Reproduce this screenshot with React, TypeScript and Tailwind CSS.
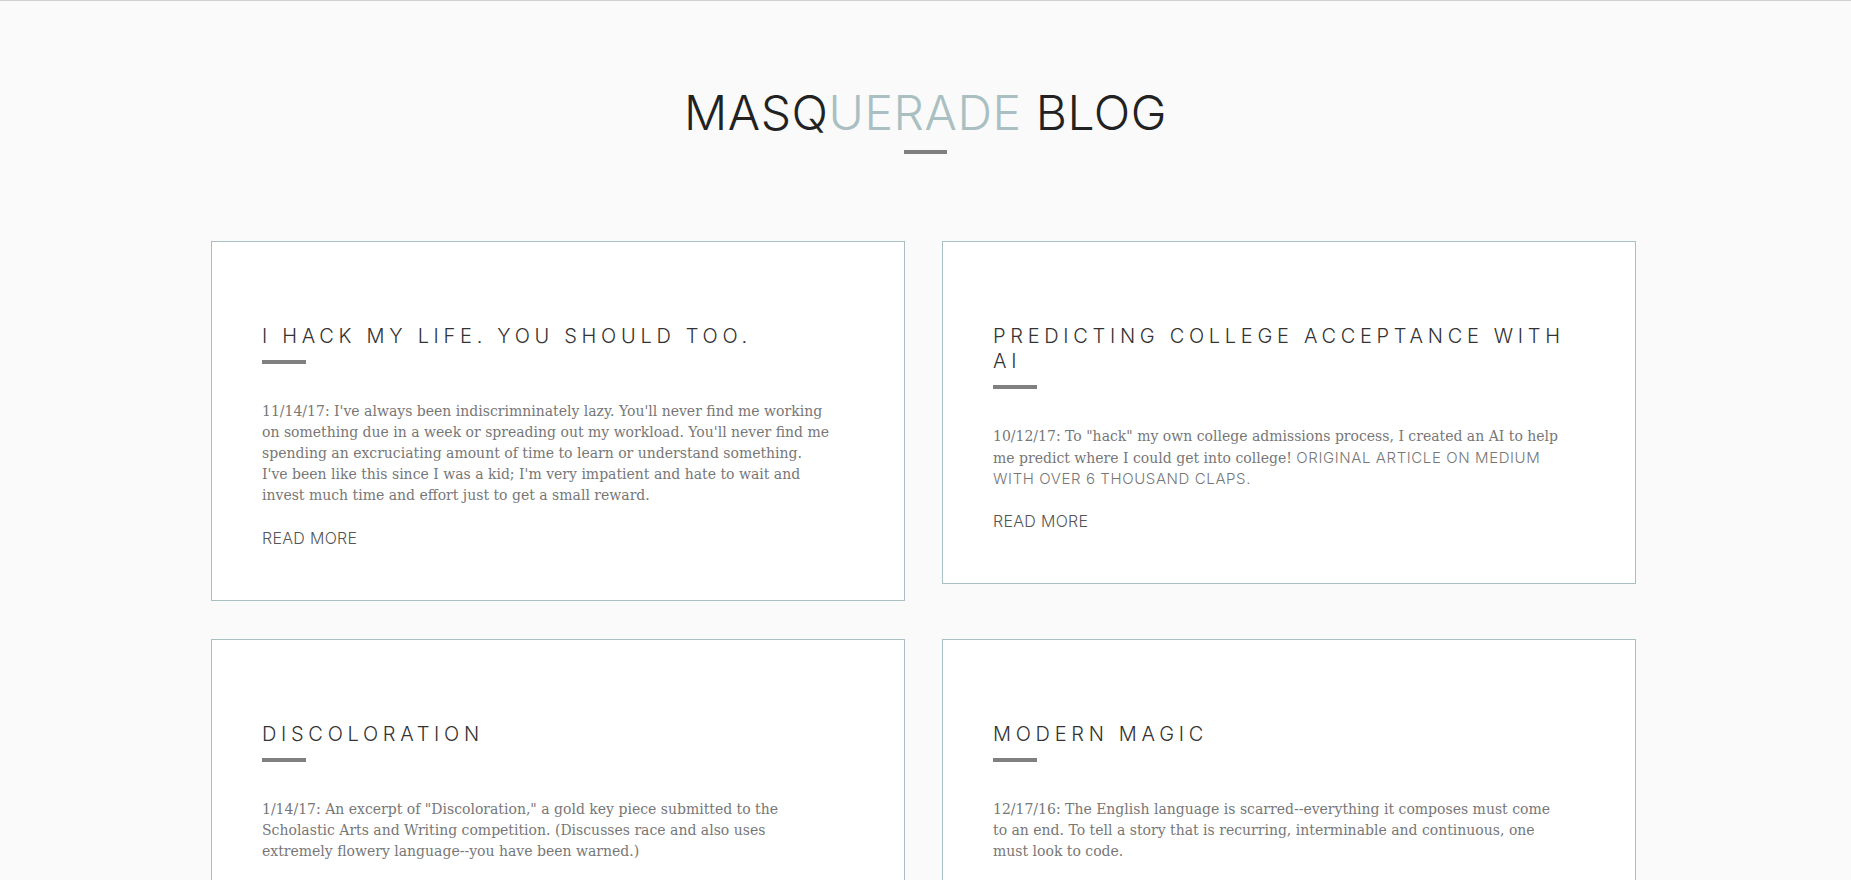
import React from "react";

const sans = "font-['Inter','Noto_Sans',sans-serif]";
const serif = "font-['DejaVu_Serif','Liberation_Serif',serif]";

type CardProps = {
  title: string[];
  lines: React.ReactNode[];
};

function Card({ title, lines }: CardProps) {
  return (
    <div className="border border-[#a9bfc0] bg-white px-[50px] pt-[82px] pb-[51px]">
      <h2 className={`${sans} text-[20px] leading-[25px] font-light tracking-[4.7px] text-[#333333]`}>
        {title.map((t, i) => (
          <span key={i} className="block whitespace-nowrap">
            {t}
          </span>
        ))}
      </h2>
      <div className="mt-[11px] h-1 w-[44px] bg-[#808080]" />
      <p className={`${serif} mt-[37px] text-[14px] leading-[21px] text-[#777777]`}>
        {lines.map((l, i) => (
          <span key={i} className="block h-[21px] whitespace-nowrap">
            {l}
          </span>
        ))}
      </p>
      <a className={`${sans} mt-[22px] block text-[16px] leading-[21px] font-light tracking-[0.3px] text-[#555555]`}>
        READ MORE
      </a>
    </div>
  );
}

export default function App() {
  return (
    <div className="min-h-screen border-t border-[#d0d0d0] bg-[#fafafa] pb-[60px]">
      <header className="pt-[83px] text-center">
        <h1 className={`${sans} text-[48px] leading-[58px] font-light tracking-[0.55px] text-[#222222]`}>
          MASQ<span className="text-[#a9bfc2]">UERADE</span> BLOG
        </h1>
        <div className="mx-auto mt-[8px] h-1 w-[43px] bg-[#808080]" />
      </header>
      <main className="ml-[211px] mt-[87px] grid w-[1425px] grid-cols-[694px_694px] items-start gap-x-[37px] gap-y-[38px]">
        <Card
          title={["I HACK MY LIFE. YOU SHOULD TOO."]}
          lines={[
            "11/14/17: I've always been indiscrimninately lazy. You'll never find me working",
            "on something due in a week or spreading out my workload. You'll never find me",
            "spending an excruciating amount of time to learn or understand something.",
            "I've been like this since I was a kid; I'm very impatient and hate to wait and",
            "invest much time and effort just to get a small reward.",
          ]}
        />
        <Card
          title={["PREDICTING COLLEGE ACCEPTANCE WITH", "AI"]}
          lines={[
            "10/12/17: To \"hack\" my own college admissions process, I created an AI to help",
            <>
              me predict where I could get into college!{" "}
              <span className={`${sans} text-[15px] leading-[21px] font-light tracking-[0.6px]`}>
                ORIGINAL ARTICLE ON MEDIUM
              </span>
            </>,
            <span className={`${sans} text-[15px] leading-[21px] font-light tracking-[0.6px]`}>
              WITH OVER 6 THOUSAND CLAPS.
            </span>,
          ]}
        />
        <Card
          title={["DISCOLORATION"]}
          lines={[
            "1/14/17: An excerpt of \"Discoloration,\" a gold key piece submitted to the",
            "Scholastic Arts and Writing competition. (Discusses race and also uses",
            "extremely flowery language--you have been warned.)",
          ]}
        />
        <Card
          title={["MODERN MAGIC"]}
          lines={[
            "12/17/16: The English language is scarred--everything it composes must come",
            "to an end. To tell a story that is recurring, interminable and continuous, one",
            "must look to code.",
          ]}
        />
      </main>
    </div>
  );
}
